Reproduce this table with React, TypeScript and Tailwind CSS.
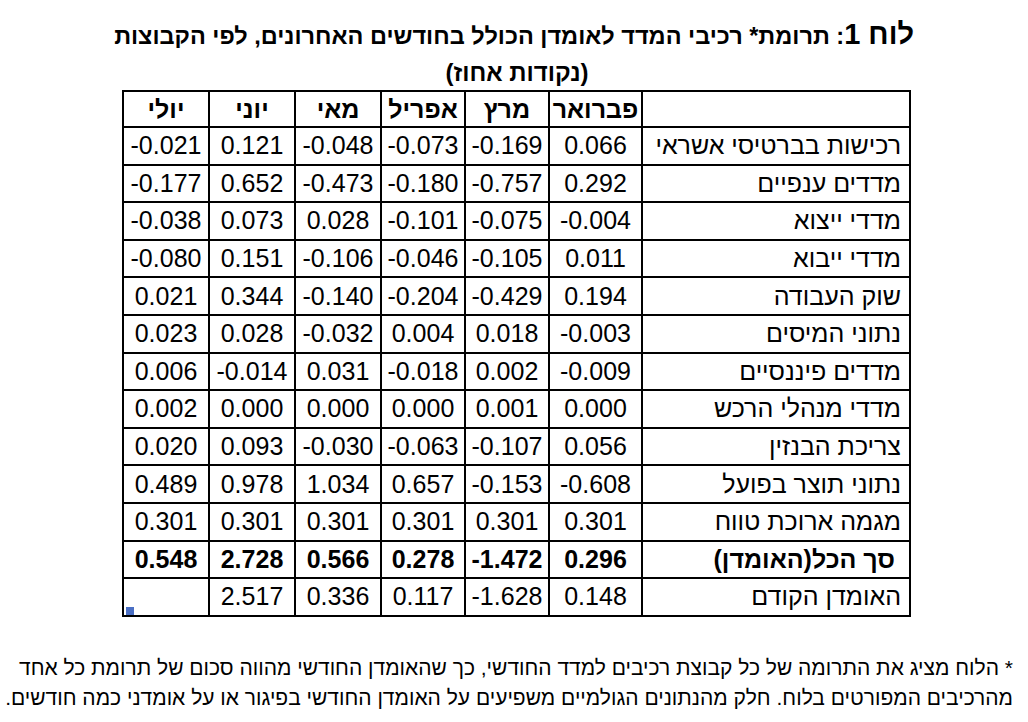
const months = ["פברואר", "מרץ", "אפריל", "מאי", "יוני", "יולי"];

const rows: { label: string; values: string[]; bold?: boolean }[] = [
  { label: "רכישות בברטיסי אשראי", values: ["0.066", "-0.169", "-0.073", "-0.048", "0.121", "-0.021"] },
  { label: "מדדים ענפיים", values: ["0.292", "-0.757", "-0.180", "-0.473", "0.652", "-0.177"] },
  { label: "מדדי ייצוא", values: ["-0.004", "-0.075", "-0.101", "0.028", "0.073", "-0.038"] },
  { label: "מדדי ייבוא", values: ["0.011", "-0.105", "-0.046", "-0.106", "0.151", "-0.080"] },
  { label: "שוק העבודה", values: ["0.194", "-0.429", "-0.204", "-0.140", "0.344", "0.021"] },
  { label: "נתוני המיסים", values: ["-0.003", "0.018", "0.004", "-0.032", "0.028", "0.023"] },
  { label: "מדדים פיננסיים", values: ["-0.009", "0.002", "-0.018", "0.031", "-0.014", "0.006"] },
  { label: "מדדי מנהלי הרכש", values: ["0.000", "0.001", "0.000", "0.000", "0.000", "0.002"] },
  { label: "צריכת הבנזין", values: ["0.056", "-0.107", "-0.063", "-0.030", "0.093", "0.020"] },
  { label: "נתוני תוצר בפועל", values: ["-0.608", "-0.153", "0.657", "1.034", "0.978", "0.489"] },
  { label: "מגמה ארוכת טווח", values: ["0.301", "0.301", "0.301", "0.301", "0.301", "0.301"] },
  { label: "סך הכל(האומדן)", values: ["0.296", "-1.472", "0.278", "0.566", "2.728", "0.548"], bold: true },
  { label: "האומדן הקודם", values: ["0.148", "-1.628", "0.117", "0.336", "2.517", ""] },
];

// column widths, right to left
const colWidths = ["w-[93px]", "w-[84px]", "w-[84px]", "w-[86px]", "w-[86px]", "w-[86px]"];

export default function App() {
  return (
    <div
      dir="rtl"
      className="w-[1028px] h-[722px] bg-white text-black overflow-hidden"
      style={{ fontFamily: '"Liberation Sans", "DejaVu Sans", sans-serif' }}
    >
      {/* Title */}
      <div className="mr-[114px] w-[794px] pt-[14px] text-center font-bold">
        <div className="text-[23.5px] leading-[40px] whitespace-nowrap">
          <span className="text-[29px]">לוח 1</span>: תרומת* רכיבי המדד לאומדן הכולל בחודשים האחרונים, לפי הקבוצות
        </div>
        <div className="text-[24px] leading-[34px]">(נקודות אחוז)</div>
      </div>

      {/* Table */}
      <div className="relative mr-[117px] w-[787px]">
        <table className="w-[787px] border-collapse table-fixed border-2 border-black">
          <thead>
            <tr className="h-[36px]">
              <th className="w-[268px] border-2 border-black"></th>
              {months.map((m, i) => (
                <th key={m} className={`${colWidths[i]} border-2 border-black text-[25px] font-bold text-center leading-none`}>
                  {m}
                </th>
              ))}
            </tr>
          </thead>
          <tbody>
            {rows.map((r) => (
              <tr key={r.label} className="h-[37.6px]">
                <td className={`border-2 border-black text-right text-[25px] leading-none whitespace-nowrap ${r.bold ? "font-bold pr-[14px]" : "pr-[8px]"}`}>
                  {r.label}
                </td>
                {r.values.map((v, i) => (
                  <td
                    key={i}
                    dir="ltr"
                    className={`border-2 border-black text-center text-[25px] leading-none ${r.bold ? "font-bold" : ""}`}
                  >
                    {v}
                  </td>
                ))}
              </tr>
            ))}
          </tbody>
        </table>
        {/* selection handle mark */}
        <div className="absolute left-[2px] bottom-[2px] w-[8px] h-[8px] bg-[#4a6fc4]" />
      </div>

      {/* Footnote */}
      <div className="mt-[36px] mr-[15px] w-[1000px] text-right text-[21px] leading-[30px] whitespace-nowrap">
        <div>* הלוח מציג את התרומה של כל קבוצת רכיבים למדד החודשי, כך שהאומדן החודשי מהווה סכום של תרומת כל אחד</div>
        <div>מהרכיבים המפורטים בלוח. חלק מהנתונים הגולמיים משפיעים על האומדן החודשי בפיגור או על אומדני כמה חודשים.</div>
      </div>
    </div>
  );
}
